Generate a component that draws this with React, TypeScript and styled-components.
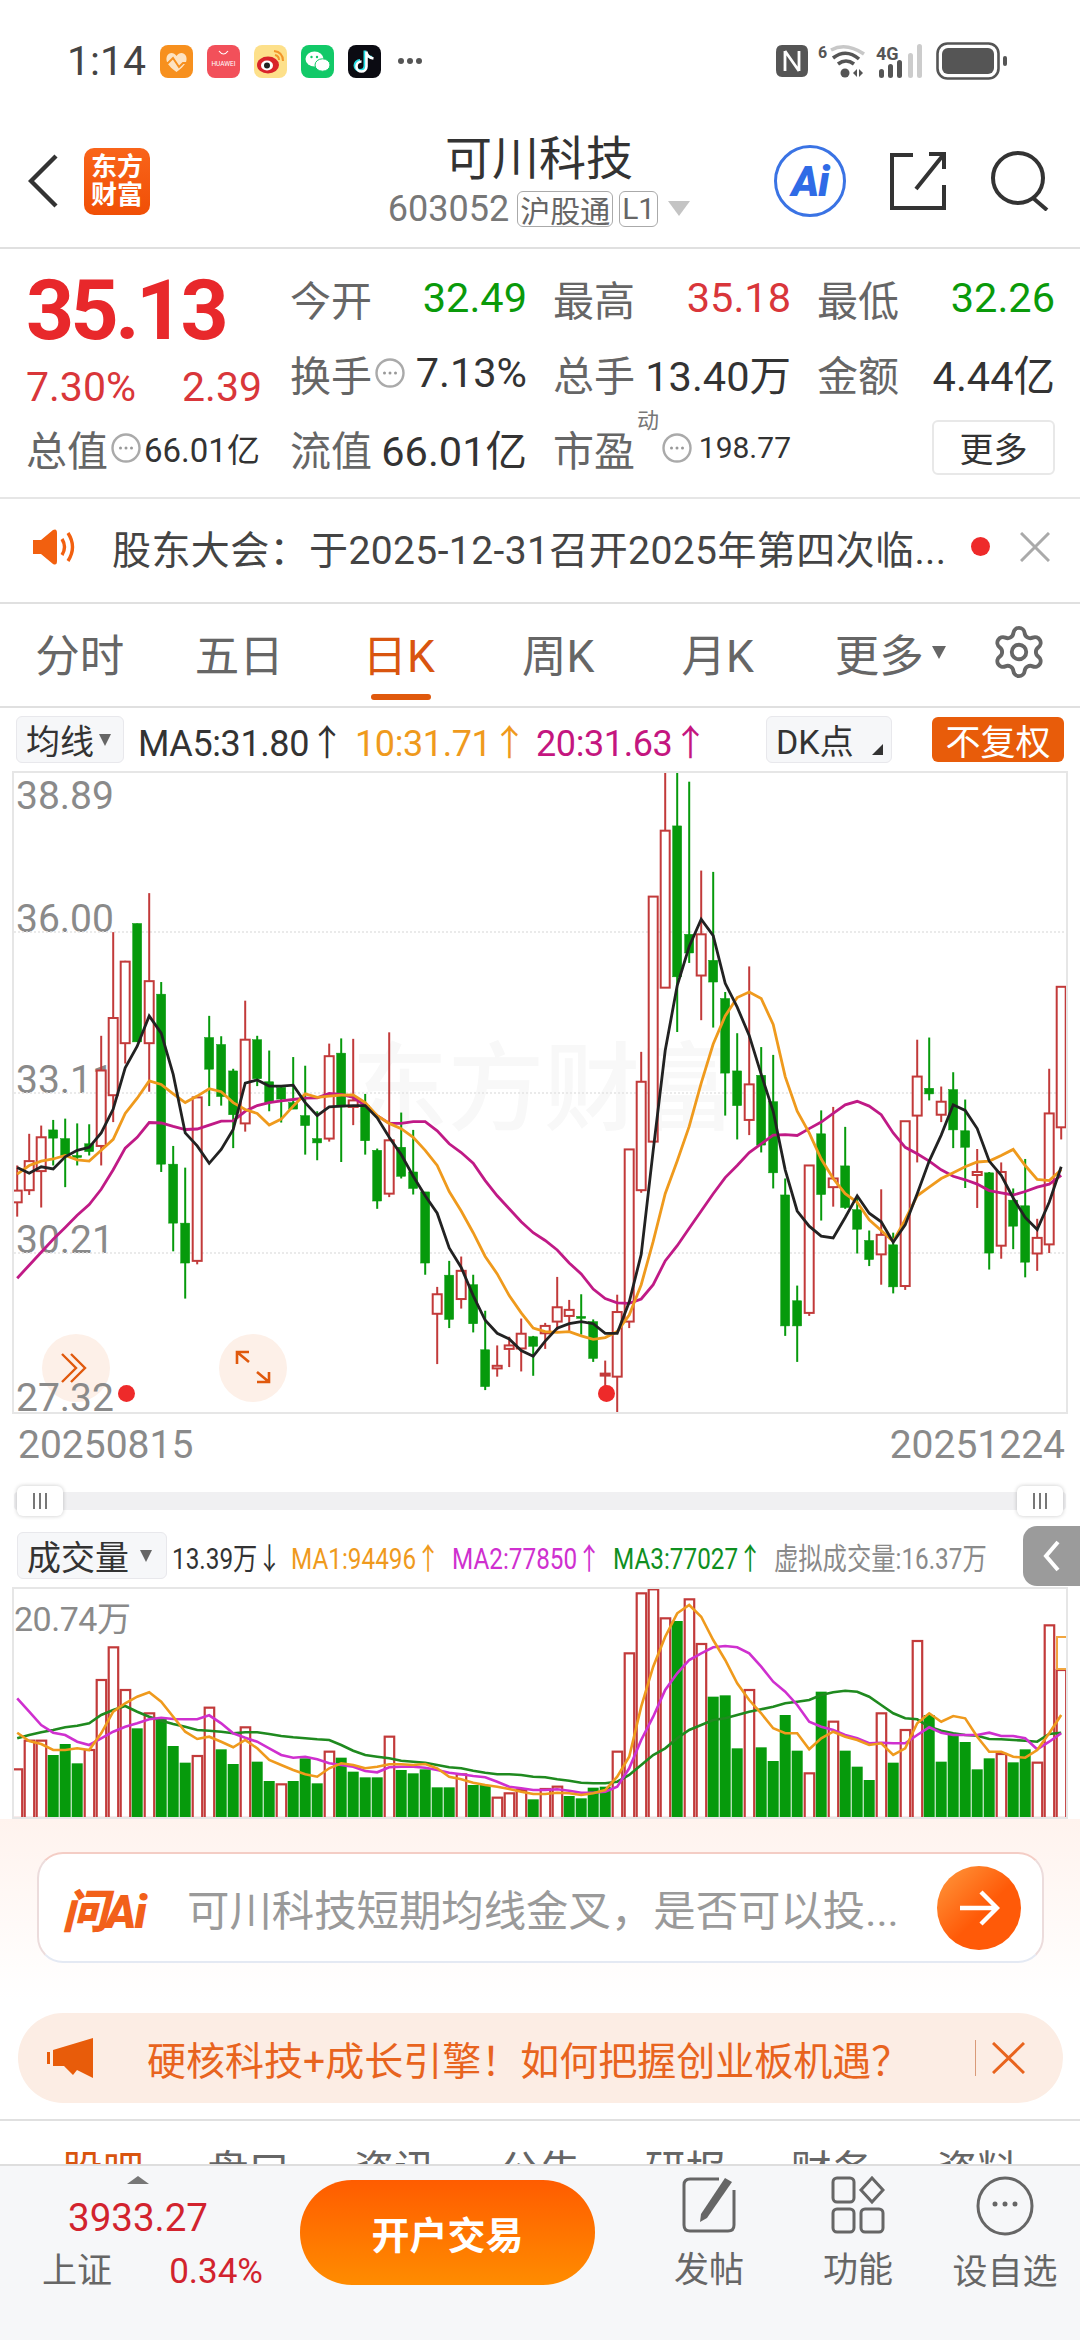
import React from 'react';
import styled, { createGlobalStyle } from 'styled-components';
import { Settings } from 'lucide-react';

const GlobalStyle = createGlobalStyle`
  html, body {
    margin: 0;
    padding: 0;
    background: #ffffff;
  }
  * {
    box-sizing: border-box;
  }
  body {
    font-family: Roboto, "Noto Sans CJK SC", sans-serif;
    color: #333333;
  }
`;

const RED_LINE = '#c23a3a';
const GREEN_BAR = '#069a0c';

// chart numbers are read off the reference: [kind, high, bodyTop, bodyBottom, low]
type Candle = ['r' | 'g', number, number, number, number];

const candles: Candle[] = [
  ['r', 935, 993, 1020, 1053], ['r', 862, 925, 992, 1003], ['r', 843, 870, 948, 1032], ['g', 830, 853, 872, 935],
  ['g', 827, 873, 912, 985], ['g', 838, 912, 916, 935], ['g', 840, 885, 903, 912], ['r', 636, 716, 890, 935],
  ['r', 397, 595, 773, 835], ['r', 463, 465, 653, 700], ['g', 377, 377, 650, 650], ['r', 307, 510, 653, 765],
  ['g', 512, 540, 932, 950], ['g', 890, 932, 1068, 1133], ['g', 940, 1068, 1160, 1242], ['r', 775, 778, 1155, 1163],
  ['g', 590, 640, 713, 798], ['g', 637, 656, 776, 797], ['g', 712, 717, 818, 895], ['r', 555, 645, 838, 857],
  ['g', 636, 645, 735, 752], ['g', 670, 742, 790, 810], ['g', 750, 755, 782, 836], ['g', 685, 790, 805, 805],
  ['g', 705, 820, 843, 910], ['g', 810, 873, 883, 923], ['r', 654, 683, 873, 880], ['g', 642, 676, 800, 927],
  ['r', 643, 785, 800, 842], ['g', 770, 797, 878, 910], ['g', 896, 900, 1017, 1035], ['r', 628, 877, 1000, 1008],
  ['g', 813, 893, 960, 965], ['g', 853, 950, 988, 1002], ['g', 996, 996, 1160, 1187], ['r', 1215, 1232, 1277, 1393],
  ['g', 1155, 1188, 1290, 1310], ['r', 1145, 1178, 1243, 1265], ['g', 1187, 1210, 1300, 1320], ['g', 1270, 1360, 1445, 1453],
  ['r', 1350, 1397, 1403, 1422], ['r', 1330, 1350, 1358, 1400], ['r', 1288, 1323, 1357, 1410], ['g', 1328, 1330, 1352, 1420],
  ['r', 1298, 1305, 1322, 1358], ['r', 1192, 1262, 1295, 1315], ['r', 1245, 1268, 1282, 1318], ['g', 1232, 1283, 1287, 1325],
  ['g', 1290, 1295, 1380, 1388], ['r', 1385, 1415, 1418, 1445], ['r', 1233, 1273, 1422, 1508], ['r', 898, 898, 1295, 1310],
  ['r', 673, 742, 992, 998], ['r', 315, 315, 880, 882], ['r', 25, 163, 525, 525], ['g', 30, 152, 500, 627],
  ['g', 50, 402, 445, 468], ['r', 255, 402, 497, 600], ['g', 258, 462, 512, 617], ['g', 535, 550, 722, 820],
  ['g', 630, 717, 797, 875], ['r', 476, 748, 830, 865], ['g', 662, 727, 888, 905], ['g', 680, 788, 952, 988],
  ['g', 965, 1003, 1305, 1328], ['g', 1212, 1247, 1305, 1388], ['r', 935, 935, 1275, 1282], ['g', 808, 862, 1002, 1062],
  ['r', 800, 965, 985, 1030], ['g', 846, 936, 1032, 1035], ['g', 1005, 1037, 1082, 1138], ['g', 1085, 1108, 1152, 1167],
  ['r', 990, 1095, 1140, 1210], ['g', 1090, 1118, 1215, 1230], ['r', 833, 833, 1213, 1222], ['r', 645, 730, 820, 928],
  ['g', 640, 757, 770, 785], ['r', 753, 788, 818, 835], ['g', 720, 760, 853, 895], ['g', 783, 855, 893, 987],
  ['r', 897, 950, 957, 1033], ['g', 950, 952, 1137, 1175], ['r', 928, 950, 1120, 1150], ['g', 988, 1015, 1075, 1128],
  ['g', 920, 1028, 1158, 1193], ['r', 1058, 1102, 1138, 1178], ['r', 712, 815, 1117, 1137], ['r', 523, 523, 847, 875],
];

const ma5 = [
  940, 953, 938, 943, 915, 900, 893, 860, 805, 710, 660, 590, 630, 725, 860, 890, 930, 898, 852, 745, 738, 752,
  752, 750, 790, 820, 800, 798, 797, 797, 825, 870, 910, 960, 1005, 1045, 1125, 1170, 1235, 1292, 1322, 1335, 1362, 1375,
  1340, 1310, 1300, 1295, 1300, 1322, 1322, 1250, 1140, 900, 670, 520, 430, 367, 405, 515, 570, 635, 725, 810, 945, 1040,
  1075, 1098, 1102, 1055, 1005, 1045, 1065, 1112, 1072, 1000, 925, 865, 795, 808, 850, 925, 958, 1010, 1055, 1083, 1020, 938,
];
const ma10 = [
  955, 935, 925, 920, 912, 922, 925, 900, 875, 815, 780, 740, 748, 770, 790, 775, 758, 765, 790, 806, 815, 842,
  828, 798, 770, 778, 775, 773, 772, 790, 820, 838, 850, 870, 900, 935, 995, 1040, 1090, 1145, 1185, 1235, 1275, 1310,
  1318, 1320, 1318, 1328, 1336, 1332, 1318, 1280, 1210, 1110, 1000, 925, 845, 745, 655, 590, 548, 535, 550, 610, 730, 810,
  860, 920, 965, 1000, 1020, 1060, 1085, 1110, 1060, 1005, 985, 965, 952, 938, 927, 925, 912, 898, 935, 967, 970, 945,
];
const ma20 = [
  1195, 1165, 1135, 1105, 1078, 1050, 1025, 990, 945, 895, 870, 836, 837, 845, 852, 851, 842, 833, 832, 810, 797, 790,
  786, 783, 780, 779, 769, 771, 778, 797, 820, 838, 838, 834, 834, 855, 885, 905, 930, 970, 1005, 1035, 1065, 1090,
  1108, 1130, 1160, 1185, 1220, 1242, 1252, 1253, 1243, 1210, 1155, 1120, 1080, 1040, 1000, 963, 935, 905, 885, 865, 864, 866,
  850, 835, 815, 795, 787, 798, 818, 860, 893, 908, 925, 945, 960, 968, 978, 993, 998, 1003, 995, 985, 978, 958,
];

// [kind, top of the bar]
const volumes: ['r' | 'g', number][] = [
  ['r', 988], ['r', 902], ['r', 902], ['g', 945], ['g', 912], ['g', 970], ['r', 930], ['r', 720], ['r', 622], ['r', 750], ['g', 865],
  ['r', 820], ['g', 835], ['g', 918], ['g', 968], ['r', 948], ['r', 803], ['g', 928], ['g', 972], ['r', 862], ['g', 965], ['g', 1023],
  ['r', 1033], ['g', 1023], ['g', 955], ['g', 1030], ['r', 935], ['g', 953], ['g', 995], ['g', 1012], ['g', 1012], ['r', 890], ['g', 990],
  ['g', 1000], ['g', 988], ['g', 1042], ['g', 1042], ['r', 1003], ['g', 1035], ['g', 1035], ['r', 1073], ['r', 1060], ['r', 1050], ['g', 1078],
  ['r', 1047], ['r', 1040], ['g', 1068], ['g', 1075], ['g', 1043], ['g', 1040], ['r', 935], ['r', 640], ['r', 460], ['r', 448], ['r', 535],
  ['g', 543], ['r', 478], ['r', 612], ['g', 770], ['g', 766], ['g', 925], ['r', 750], ['g', 922], ['g', 963], ['g', 825], ['g', 932], ['r', 1000],
  ['g', 755], ['r', 845], ['g', 932], ['g', 980], ['g', 1020], ['r', 820], ['g', 968], ['r', 870], ['r', 603], ['g', 825], ['g', 965], ['g', 885],
  ['g', 906], ['g', 988], ['g', 955], ['r', 942], ['g', 967], ['g', 928], ['r', 968], ['r', 556], ['r', 690],
];
const vol1 = [
  878, 903, 912, 930, 930, 925, 930, 880, 815, 790, 770, 757, 785, 830, 875, 897, 890, 905, 922, 900, 925, 960, 975, 990, 1003, 1010, 985, 970, 975,
  985, 980, 973, 973, 975, 972, 985, 1010, 1018, 1028, 1035, 1040, 1047, 1055, 1062, 1062, 1058, 1060, 1065, 1060, 1050, 1010, 950, 800, 680, 590, 520,
  495, 530, 600, 660, 730, 780, 820, 865, 880, 880, 928, 895, 875, 890, 900, 915, 910, 945, 925, 850, 820, 845, 828, 835, 890, 935, 935, 950, 953, 930, 880, 825,
];
const vol2 = [
  775, 815, 855, 878, 885, 905, 915, 895, 875, 860, 850, 838, 833, 837, 838, 838, 826, 850, 880, 893, 905, 925, 945, 953, 950, 958, 970, 975, 980,
  993, 997, 982, 980, 980, 983, 990, 998, 1003, 1008, 1012, 1025, 1040, 1045, 1050, 1050, 1048, 1052, 1058, 1058, 1055, 1040, 985, 900, 830, 750, 700,
  660, 640, 622, 618, 622, 640, 680, 725, 755, 795, 845, 860, 870, 885, 895, 910, 908, 910, 910, 885, 862, 878, 885, 885, 885, 878, 888, 888, 895, 928, 905, 880,
];
const vol3 = [
  895, 885, 877, 870, 862, 857, 850, 825, 810, 798, 815, 830, 842, 852, 860, 870, 872, 875, 880, 877, 877, 882, 888, 892, 895, 898, 900, 915, 932,
  945, 950, 955, 962, 965, 968, 975, 982, 985, 992, 998, 1003, 1003, 1005, 1010, 1012, 1018, 1022, 1028, 1030, 1030, 1025, 1005, 975, 945, 925, 895,
  870, 855, 840, 835, 825, 815, 808, 800, 790, 785, 780, 765, 757, 752, 755, 770, 795, 820, 835, 838, 860, 872, 880, 885, 887, 897, 898, 900, 902, 905, 882, 878,
];

const slotX = (i: number) => 17.2 + 12 * i;
const priceY = (v: number) => 760 + v / 2.306;
const volY = (v: number) => 1440 + v / 3;

const toPoints = (values: number[], toY: (v: number) => number) =>
  values.map((v, i) => `${slotX(i).toFixed(1)},${toY(v).toFixed(1)}`).join(' ');

const Page = styled.div`
  position: relative;
  width: 1080px;
  height: 2340px;
  overflow: hidden;
  background: #ffffff;
`;

const StatusBar = styled.div`
  display: flex;
  align-items: center;
  height: 122px;
  padding: 0 72px 0 67px;
`;

const StatusTime = styled.span`
  width: 93px;
  font-size: 41px;
  color: #444444;
`;

const StatusApps = styled.div`
  display: flex;
  align-items: center;
  gap: 14px;
`;

const StatusDots = styled.div`
  display: flex;
  gap: 3px;
  margin-left: 3px;
`;

const StatusDot = styled.i`
  width: 6px;
  height: 6px;
  border-radius: 50%;
  background: #555555;
`;

const StatusRight = styled.div`
  display: flex;
  align-items: center;
  gap: 10px;
  margin-left: auto;
`;

const Header = styled.div`
  display: grid;
  grid-template-columns: 1fr auto 1fr;
  align-items: center;
  height: 127px;
  padding: 0 30px 7px 28px;
  border-bottom: 2px solid #e0e0e0;
`;

const HeaderLeft = styled.div`
  display: flex;
  align-items: center;
  gap: 26px;
`;

const BrandLogo = styled.div`
  display: flex;
  align-items: center;
  justify-content: center;
  width: 66px;
  height: 67px;
  border-radius: 10px;
  background: linear-gradient(#f9641a, #f04f06);
  color: #ffffff;
  font-size: 26px;
  font-weight: 700;
  line-height: 28px;
  text-align: center;
`;

const HeaderCenter = styled.div`
  display: flex;
  flex-direction: column;
  align-items: center;
  margin-top: -3px;
`;

const StockName = styled.div`
  font-size: 47px;
  line-height: 58px;
  color: #333333;
`;

const StockMeta = styled.div`
  display: flex;
  align-items: center;
  height: 42px;
  color: #777777;
  font-size: 36px;
`;

const MetaBadge = styled.span<{ $gap: number }>`
  display: flex;
  align-items: center;
  height: 36px;
  margin-left: ${(p) => p.$gap}px;
  padding: 0 2px;
  border: 1.5px solid #aaaaaa;
  border-radius: 6px;
  font-size: 30px;
  color: #666666;
`;

const MetaCaret = styled.i`
  margin-left: 10px;
  border-left: 11px solid transparent;
  border-right: 11px solid transparent;
  border-top: 15px solid #c4c4c4;
`;

const HeaderRight = styled.div`
  display: flex;
  align-items: center;
  justify-content: flex-end;
  gap: 43px;
`;

const AiBadge = styled.div`
  position: relative;
  display: flex;
  align-items: center;
  justify-content: center;
  width: 72px;
  height: 72px;
  border: 3px solid #3a73e4;
  border-radius: 50%;
  color: #2f6be6;
  font-size: 42px;
  font-weight: 900;
  font-style: italic;
  letter-spacing: -1px;
`;

const Quote = styled.div`
  display: flex;
  height: 250px;
  padding-left: 26px;
  border-bottom: 2px solid #e6e6e6;
`;

const QuoteLeft = styled.div`
  display: flex;
  flex-direction: column;
  width: 264px;
  padding-top: 12px;
`;

const BigPrice = styled.div`
  height: 100px;
  font-size: 84px;
  font-weight: 700;
  line-height: 100px;
  color: #e8282b;
  letter-spacing: -3.6px;
`;

const ChangeRow = styled.div`
  display: flex;
  justify-content: space-between;
  align-items: center;
  width: 236px;
  height: 52px;
  font-size: 41px;
  color: #d9363a;
`;

const TotalRow = styled.div`
  display: flex;
  align-items: center;
  width: 236px;
  height: 70px;
`;

const QuoteGrid = styled.div`
  display: grid;
  grid-template-columns: 237px 238px 238px;
  grid-auto-rows: 75px;
  column-gap: 26px;
  padding-top: 11px;
`;

const Cell = styled.div`
  display: flex;
  justify-content: space-between;
  align-items: center;
`;

const CellGroup = styled.div`
  display: flex;
  align-items: center;
`;

const Label = styled.span`
  flex: none;
  font-size: 41px;
  color: #666666;
  white-space: nowrap;
`;

const Value = styled.span<{ $tone?: 'up' | 'down'; $small?: boolean }>`
  flex: none;
  font-size: ${(p) => (p.$small ? 33 : 41.5)}px;
  color: ${(p) => (p.$tone === 'up' ? '#d9363a' : p.$tone === 'down' ? '#0a9a0a' : '#333333')};
  white-space: nowrap;
`;

const PeValue = styled.span`
  flex: none;
  font-size: 30px;
  color: #333333;
`;

const SmallNote = styled.span`
  align-self: flex-start;
  margin: -10px 0 0 2px;
  font-size: 22px;
  line-height: 26px;
  color: #777777;
`;

const MoreButton = styled.div`
  display: flex;
  align-items: center;
  justify-content: center;
  width: 123px;
  height: 55px;
  border: 2px solid #e8e8e8;
  border-radius: 6px;
  font-size: 34px;
  color: #333333;
`;

const Notice = styled.div`
  display: flex;
  align-items: center;
  height: 105px;
  padding: 0 30px 8px 33px;
  border-bottom: 2px solid #e0e0e0;
`;

const NoticeText = styled.span`
  flex: 1;
  margin-left: 33px;
  font-size: 39px;
  letter-spacing: 0.4px;
  color: #444444;
  white-space: nowrap;
`;

const NoticeDot = styled.i`
  flex: none;
  width: 19px;
  height: 19px;
  margin-right: 30px;
  border-radius: 50%;
  background: #ee2a2a;
`;

const Tabs = styled.div`
  display: grid;
  grid-template-columns: repeat(6, 159.5px) 1fr;
  align-items: center;
  height: 104px;
  border-bottom: 2px solid #e0e0e0;
`;

const Tab = styled.div<{ $active?: boolean; $shift?: number }>`
  position: relative;
  display: flex;
  align-items: center;
  justify-content: center;
  height: 100%;
  padding-bottom: 6px;
  padding-left: ${(p) => p.$shift ?? 0}px;
  font-size: 44.5px;
  color: ${(p) => (p.$active ? '#d9550f' : '#666666')};
  ${(p) =>
    p.$active &&
    `&::after {
      content: '';
      position: absolute;
      left: 50%;
      bottom: 6px;
      width: 60px;
      height: 6px;
      margin-left: -28px;
      border-radius: 3px;
      background: #e0590d;
    }`}
`;

const TabCaret = styled.i`
  margin-left: 8px;
  border-left: 7px solid transparent;
  border-right: 7px solid transparent;
  border-top: 13px solid #666666;
`;

const GearCell = styled.div`
  display: flex;
  justify-content: center;
  color: #666666;
  padding-bottom: 6px;
`;

const IndicatorRow = styled.div`
  display: flex;
  align-items: center;
  height: 63px;
  padding: 0 16px;
  white-space: nowrap;
`;

const SelectButton = styled.div<{ $width: number; $left?: number }>`
  position: relative;
  display: flex;
  align-items: center;
  gap: 5px;
  flex: none;
  width: ${(p) => p.$width}px;
  height: 47px;
  margin-left: ${(p) => p.$left ?? 0}px;
  padding-left: 9px;
  border: 1.5px solid #e8e8ec;
  border-radius: 6px;
  background: #f6f7f9;
  font-size: 34px;
  color: #333333;
`;

const SelectCaret = styled.i<{ $left?: number }>`
  margin-left: ${(p) => p.$left ?? 0}px;
  border-left: 6px solid transparent;
  border-right: 6px solid transparent;
  border-top: 12px solid #666666;
`;

const CornerMark = styled.i`
  position: absolute;
  right: 8px;
  bottom: 7px;
  border-left: 11px solid transparent;
  border-bottom: 11px solid #333333;
`;

const MaText = styled.span<{ $color: string; $left: number; $width?: number }>`
  flex: none;
  width: ${(p) => (p.$width ? `${p.$width}px` : 'auto')};
  margin-left: ${(p) => p.$left}px;
  font-size: 36px;
  letter-spacing: -0.4px;
  color: ${(p) => p.$color};
`;

const ReinstateButton = styled.div`
  display: flex;
  align-items: center;
  justify-content: center;
  flex: none;
  width: 132px;
  height: 45px;
  margin-left: auto;
  border-radius: 6px;
  background: #e85c0a;
  font-size: 35px;
  color: #ffffff;
`;

const ChartFrame = styled.div<{ $height: number }>`
  position: relative;
  height: ${(p) => p.$height}px;
  margin: 0 12px 0 12px;
  border: 2px solid #e6e6e6;
`;

const ChartSvg = styled.svg`
  position: absolute;
  inset: 0;
  display: block;
  width: 100%;
  height: 100%;
`;

const Watermark = styled.div`
  position: absolute;
  left: 338px;
  top: 256px;
  font-size: 96px;
  font-weight: 500;
  line-height: 120px;
  color: #f8f8f8;
  white-space: nowrap;
`;

const AxisLabel = styled.span<{ $top: number }>`
  position: absolute;
  left: 2px;
  top: ${(p) => p.$top}px;
  font-size: 39px;
  line-height: 44px;
  color: #8a8a8a;
`;

const RoundAction = styled.div<{ $left: number }>`
  position: absolute;
  left: ${(p) => p.$left}px;
  top: 561px;
  display: flex;
  align-items: center;
  justify-content: center;
  width: 68px;
  height: 68px;
  border-radius: 50%;
  background: #fdf0e8;
`;

const MarkDot = styled.i<{ $left: number }>`
  position: absolute;
  left: ${(p) => p.$left}px;
  top: 612px;
  width: 17px;
  height: 17px;
  border-radius: 50%;
  background: #ee2a2a;
`;

const DateRow = styled.div`
  display: flex;
  justify-content: space-between;
  align-items: center;
  height: 62px;
  padding: 0 15px 0 18px;
  font-size: 39px;
  color: #8a8a8a;
`;

const SliderRow = styled.div`
  position: relative;
  display: flex;
  align-items: center;
  height: 50px;
  margin: 0 14px;
`;

const SliderTrack = styled.div`
  width: 100%;
  height: 18px;
  border-radius: 4px;
  background: #f0f0f2;
`;

const SliderHandle = styled.div<{ $side: 'left' | 'right' }>`
  position: absolute;
  top: 10px;
  ${(p) => p.$side}: 3px;
  display: flex;
  align-items: center;
  justify-content: center;
  gap: 4px;
  width: 46px;
  height: 30px;
  border-radius: 6px;
  background: #ffffff;
  box-shadow: 0 0 4px rgba(0, 0, 0, 0.22);
`;

const HandleLine = styled.i`
  width: 2px;
  height: 16px;
  background: #777777;
`;

const VolumeHeader = styled.div`
  position: relative;
  display: flex;
  align-items: center;
  height: 61px;
  padding: 0 0 2px 17px;
  white-space: nowrap;
`;

// the source font is a narrow one: the text keeps its height and is squeezed sideways
const VolumeText = styled.span<{ $color: string; $width: number }>`
  flex: none;
  width: ${(p) => p.$width}px;
  margin-left: 11px;
  font-size: 30px;
  color: ${(p) => p.$color};
  transform: scaleX(0.81);
  transform-origin: left center;
`;

const CollapseTab = styled.div`
  position: absolute;
  right: 0;
  top: 0;
  display: flex;
  align-items: center;
  justify-content: center;
  width: 57px;
  height: 60px;
  border-radius: 14px 0 0 14px;
  background: #9b9b9b;
`;

const VolumeLabel = styled.span`
  position: absolute;
  left: 0;
  top: 10px;
  font-size: 34px;
  line-height: 40px;
  letter-spacing: -0.5px;
  color: #8a8a8a;
`;

const Promo = styled.div`
  display: flex;
  flex-direction: column;
  height: 302px;
  padding-top: 33px;
  background: linear-gradient(#fff3ee, #ffffff 60%);
  border-bottom: 2px solid #e0e0e0;
`;

const AskCard = styled.div`
  display: flex;
  align-items: center;
  height: 111px;
  margin: 0 36px 0 37px;
  padding: 0 21px 0 23px;
  border: 2px solid #ecdcdc;
  border-top-color: #f4cdc5;
  border-bottom-color: #e4e9f3;
  border-radius: 26px;
  background: #ffffff;
`;

const AskLogo = styled.span`
  flex: none;
  width: 100px;
  font-size: 46px;
  font-weight: 900;
  font-style: italic;
  letter-spacing: -2px;
  color: #f2601a;
`;

const AskText = styled.span`
  flex: 1;
  margin-left: 25px;
  font-size: 42.4px;
  color: #9a9a9a;
  white-space: nowrap;
`;

const AskGo = styled.div`
  display: flex;
  align-items: center;
  justify-content: center;
  flex: none;
  width: 84px;
  height: 84px;
  border-radius: 50%;
  background: linear-gradient(135deg, #ff9a3e, #ff5a08 55%);
`;

const Banner = styled.div`
  display: flex;
  align-items: center;
  height: 90px;
  margin: 50px 17px 0 18px;
  padding: 0 38px 0 29px;
  border-radius: 45px;
  background: #fcede4;
`;

const BannerText = styled.span`
  flex: 1;
  margin-left: 54px;
  font-size: 39px;
  color: #e8641e;
  white-space: nowrap;
`;

const BannerDivider = styled.i`
  flex: none;
  width: 1px;
  height: 36px;
  margin-right: 16px;
  background: #d99a78;
`;

const SubTabs = styled.div`
  display: grid;
  grid-template-columns: repeat(7, 1fr);
  padding: 22px 30px 0 30px;
`;

const SubTab = styled.div<{ $active?: boolean }>`
  font-size: 41px;
  line-height: 56px;
  text-align: center;
  color: ${(p) => (p.$active ? '#d9550f' : '#666666')};
`;

const BottomBar = styled.div`
  position: absolute;
  left: 0;
  right: 0;
  bottom: 0;
  display: flex;
  height: 176px;
  border-top: 2px solid #dedede;
  background: #f6f7f9;
`;

const IndexBlock = styled.div`
  position: relative;
  flex: none;
  width: 300px;
  padding: 29px 0 0 42px;
`;

const IndexCaret = styled.i`
  position: absolute;
  left: 127px;
  top: 10px;
  border-left: 11px solid transparent;
  border-right: 11px solid transparent;
  border-bottom: 8px solid #777777;
`;

const IndexValue = styled.div`
  margin-left: 26px;
  font-size: 38.5px;
  line-height: 46px;
  color: #d2232e;
`;

const IndexRow = styled.div`
  display: flex;
  justify-content: space-between;
  align-items: center;
  width: 221px;
  margin-top: 9px;
  font-size: 35px;
  line-height: 44px;
  color: #666666;
`;

const IndexChange = styled.span`
  color: #d2232e;
`;

const TradeButton = styled.div`
  display: flex;
  align-items: center;
  justify-content: center;
  flex: none;
  width: 295px;
  height: 105px;
  margin-top: 14px;
  border-radius: 52px;
  background: linear-gradient(#ff5c00, #ff8c00);
  font-size: 38px;
  font-weight: 700;
  color: #ffffff;
`;

const BarAction = styled.div<{ $left: number }>`
  display: flex;
  flex-direction: column;
  align-items: center;
  flex: none;
  width: 110px;
  margin-left: ${(p) => p.$left}px;
  padding-top: 10px;
  font-size: 35px;
  color: #666666;
`;

const BarActionLabel = styled.span`
  margin-top: 17px;
  line-height: 40px;
  white-space: nowrap;
`;

function InfoDot(): JSX.Element {
  return (
    <svg width="30" height="30" viewBox="0 0 30 30" style={{ flex: 'none', margin: '0 3px' }}>
      <circle cx="15" cy="15" r="13.5" fill="none" stroke="#aaaaaa" strokeWidth="2.4" />
      <circle cx="9.5" cy="15" r="1.5" fill="#999999" />
      <circle cx="15" cy="15" r="1.5" fill="#999999" />
      <circle cx="20.5" cy="15" r="1.5" fill="#999999" />
    </svg>
  );
}

function AppIcons(): JSX.Element {
  return (
    <StatusApps>
      <svg width="33" height="33" viewBox="0 0 33 33">
        <rect width="33" height="33" rx="8" fill="#f7901e" />
        <path d="M16.5 27 C8 21 5 16 7 11 C9 7 14 7 16.5 11 C19 7 24 7 26 11 C28 16 25 21 16.5 27Z" fill="#fde3c2" />
        <path d="M0 18 H8 L13 13 L19 22 L23 18 H33" fill="none" stroke="#f7901e" strokeWidth="2" />
      </svg>
      <svg width="33" height="33" viewBox="0 0 33 33">
        <rect width="33" height="33" rx="8" fill="#f2505a" />
        <path d="M12 6 Q16.5 12 21 6" fill="none" stroke="#ffffff" strokeWidth="1.2" />
        <text x="16.5" y="21" fontSize="6.5" fill="#ffffff" textAnchor="middle" fontFamily="Roboto">
          HUAWEI
        </text>
      </svg>
      <svg width="33" height="33" viewBox="0 0 33 33">
        <rect width="33" height="33" rx="8" fill="#fde08a" />
        <ellipse cx="14" cy="20" rx="11" ry="8.5" fill="#d9232a" />
        <ellipse cx="13" cy="20.5" rx="6" ry="5" fill="#ffffff" />
        <circle cx="13" cy="20.5" r="3" fill="#222222" />
        <path d="M20 6 Q29 7 29 16 M21 10 Q25 11 25 15" fill="none" stroke="#f2952a" strokeWidth="2" />
      </svg>
      <svg width="33" height="33" viewBox="0 0 33 33">
        <rect width="33" height="33" rx="8" fill="#12c968" />
        <ellipse cx="13.5" cy="14" rx="9" ry="7.5" fill="#ffffff" />
        <ellipse cx="21.5" cy="20" rx="7.5" ry="6.2" fill="#ffffff" stroke="#12c968" strokeWidth="1" />
        <circle cx="10.5" cy="12" r="1.2" fill="#12c968" />
        <circle cx="16" cy="12" r="1.2" fill="#12c968" />
      </svg>
      <svg width="33" height="33" viewBox="0 0 33 33">
        <rect width="33" height="33" rx="8" fill="#0b0b12" />
        <path
          d="M18 6 V21 a5 5 0 1 1 -5 -5 M18 7 Q19 12 25 13"
          fill="none"
          stroke="#25e0e8"
          strokeWidth="3"
          transform="translate(-1,-0.5)"
        />
        <path
          d="M18 6 V21 a5 5 0 1 1 -5 -5 M18 7 Q19 12 25 13"
          fill="none"
          stroke="#ffffff"
          strokeWidth="2.6"
          transform="translate(0.5,0.5)"
        />
      </svg>
      <StatusDots>
        <StatusDot />
        <StatusDot />
        <StatusDot />
      </StatusDots>
    </StatusApps>
  );
}

function SystemIcons(): JSX.Element {
  return (
    <StatusRight>
      <svg width="32" height="34" viewBox="0 0 32 34">
        <path d="M6 1 H26 Q32 1 32 8 V26 Q32 33 26 33 H6 Q0 33 0 26 V8 Q0 1 6 1Z" fill="#555555" />
        <path d="M9 7 V27 M9 7 L23 27 M23 7 V27" fill="none" stroke="#ffffff" strokeWidth="2.8" />
      </svg>
      <svg width="48" height="36" viewBox="0 0 48 36">
        <text x="0" y="15" fontSize="16" fontWeight="700" fill="#555555" fontFamily="Roboto">
          6
        </text>
        <path d="M13 7 Q28 -1 46 11" fill="none" stroke="#c8c8c8" strokeWidth="3.6" />
        <path d="M15 15 Q28 5 41 16 M20 21 Q28 15 36 21" fill="none" stroke="#555555" strokeWidth="3.6" />
        <circle cx="27" cy="30" r="4.5" fill="#555555" />
        <path d="M35 30 L39 26 V34Z M41 26 V34 L45 30Z" fill="#555555" />
      </svg>
      <svg width="50" height="36" viewBox="0 0 50 36">
        <text x="0" y="17" fontSize="18" fontWeight="700" fill="#555555" fontFamily="Roboto">
          4G
        </text>
        <rect x="3" y="26" width="5" height="9" rx="2.5" fill="#555555" />
        <rect x="12" y="21" width="5" height="14" rx="2.5" fill="#555555" />
        <rect x="21" y="17" width="5" height="18" rx="2.5" fill="#555555" />
        <rect x="32" y="10" width="5" height="25" rx="2.5" fill="#cccccc" />
        <rect x="41" y="1" width="5" height="34" rx="2.5" fill="#cccccc" />
      </svg>
      <svg width="72" height="38" viewBox="0 0 72 38">
        <rect x="1.5" y="1.5" width="61" height="35" rx="10" fill="none" stroke="#555555" strokeWidth="2.6" />
        <rect x="6" y="6" width="52" height="26" rx="6" fill="#555555" />
        <rect x="67" y="14" width="4" height="10" rx="2" fill="#555555" />
      </svg>
    </StatusRight>
  );
}

function PriceChart(): JSX.Element {
  return (
    <ChartFrame $height={643}>
      <Watermark>东方财富</Watermark>
      <RoundAction $left={28}>
        <svg width="34" height="34" viewBox="0 0 34 34" fill="none" stroke="#e0590d" strokeWidth="2.4">
          <path d="M3 3 L17 17 L3 31 M12 3 L26 17 L12 31" />
        </svg>
      </RoundAction>
      <RoundAction $left={205}>
        <svg width="36" height="36" viewBox="0 0 36 36" fill="none" stroke="#e0590d" strokeWidth="2.6">
          <path d="M2 14 V2 H14 M2 2 L14 12 M34 22 V32 H22 M34 32 L22 22" />
        </svg>
      </RoundAction>
      <AxisLabel $top={1}>38.89</AxisLabel>
      <AxisLabel $top={124}>36.00</AxisLabel>
      <AxisLabel $top={285}>33.11</AxisLabel>
      <AxisLabel $top={445}>30.21</AxisLabel>
      <AxisLabel $top={603}>27.32</AxisLabel>
      <ChartSvg viewBox="14 773 1052 639">
        {[932, 1093, 1253].map((y) => (
          <line key={y} x1="14" x2="1066" y1={y} y2={y} stroke="#e4e4e4" strokeWidth="1.5" strokeDasharray="2 2" />
        ))}
        {candles.map(([kind, high, top, bottom, low], i) => {
          const x = slotX(i);
          const up = kind === 'r';
          const color = up ? RED_LINE : GREEN_BAR;
          const bodyTop = priceY(top);
          const bodyHeight = Math.max(priceY(bottom) - bodyTop, 2);
          return (
            <g key={i}>
              <line x1={x} x2={x} y1={priceY(high)} y2={priceY(low)} stroke={color} strokeWidth="2" />
              <rect
                x={x - 4.5}
                y={bodyTop}
                width="9"
                height={bodyHeight}
                fill={up ? '#ffffff' : color}
                stroke={color}
                strokeWidth={up ? 2 : 0.5}
              />
            </g>
          );
        })}
        <polyline points={toPoints(ma20, priceY)} fill="none" stroke="#c01a86" strokeWidth="2.8" />
        <polyline points={toPoints(ma10, priceY)} fill="none" stroke="#ef9a1d" strokeWidth="2.8" />
        <polyline points={toPoints(ma5, priceY)} fill="none" stroke="#222222" strokeWidth="2.8" />
      </ChartSvg>
      <MarkDot $left={104} />
      <MarkDot $left={584} />
    </ChartFrame>
  );
}

function VolumeChart(): JSX.Element {
  return (
    <ChartFrame $height={232}>
      <VolumeLabel>20.74万</VolumeLabel>
      <ChartSvg viewBox="14 1589 1052 228">
        {volumes.map(([kind, top], i) => {
          const x = slotX(i);
          const y = volY(top);
          const height = 1818 - y;
          return kind === 'r' ? (
            <rect key={i} x={x - 4.5} y={y} width="9.5" height={height} fill="#ffffff" stroke={RED_LINE} strokeWidth="2.2" />
          ) : (
            <rect key={i} x={x - 5.5} y={y} width="11" height={height} fill={GREEN_BAR} />
          );
        })}
        <rect x="1057" y="1637" width="10" height="32" fill="none" stroke="#f2a640" strokeWidth="2" />
        <polyline points={toPoints(vol3, volY)} fill="none" stroke="#1f8a1f" strokeWidth="2.6" />
        <polyline points={toPoints(vol2, volY)} fill="none" stroke="#cf30cf" strokeWidth="2.6" />
        <polyline points={toPoints(vol1, volY)} fill="none" stroke="#ef9a1d" strokeWidth="2.6" />
      </ChartSvg>
    </ChartFrame>
  );
}

export default function App(): JSX.Element {
  return (
    <Page>
      <GlobalStyle />
      <StatusBar>
        <StatusTime>1:14</StatusTime>
        <AppIcons />
        <SystemIcons />
      </StatusBar>

      <Header>
        <HeaderLeft>
          <svg width="30" height="54" viewBox="0 0 30 54" fill="none" stroke="#333333" strokeWidth="4.4">
            <path d="M28 2 L3 27 L28 52" />
          </svg>
          <BrandLogo>
            东方
            <br />
            财富
          </BrandLogo>
        </HeaderLeft>
        <HeaderCenter>
          <StockName>可川科技</StockName>
          <StockMeta>
            603052
            <MetaBadge $gap={8}>沪股通</MetaBadge>
            <MetaBadge $gap={6}>L1</MetaBadge>
            <MetaCaret />
          </StockMeta>
        </HeaderCenter>
        <HeaderRight>
          <AiBadge>Ai</AiBadge>
          <svg width="58" height="60" viewBox="0 0 58 60" fill="none" stroke="#333333" strokeWidth="4">
            <path d="M24 4 H3 V57 H55 V34 M55 18 V3 H40 M55 3 L27 38" />
          </svg>
          <svg width="60" height="60" viewBox="0 0 60 60" fill="none" stroke="#333333" strokeWidth="4">
            <circle cx="28" cy="27" r="25" />
            <path d="M43 47 L57 59" />
          </svg>
        </HeaderRight>
      </Header>

      <Quote>
        <QuoteLeft>
          <BigPrice>35.13</BigPrice>
          <ChangeRow>
            <span>7.30%</span>
            <span>2.39</span>
          </ChangeRow>
          <TotalRow>
            <Label>总值</Label>
            <InfoDot />
            <Value $small>66.01亿</Value>
          </TotalRow>
        </QuoteLeft>
        <QuoteGrid>
          <Cell>
            <Label>今开</Label>
            <Value $tone="down">32.49</Value>
          </Cell>
          <Cell>
            <Label>最高</Label>
            <Value $tone="up">35.18</Value>
          </Cell>
          <Cell>
            <Label>最低</Label>
            <Value $tone="down">32.26</Value>
          </Cell>
          <Cell>
            <CellGroup>
              <Label>换手</Label>
              <InfoDot />
            </CellGroup>
            <Value>7.13%</Value>
          </Cell>
          <Cell>
            <Label>总手</Label>
            <Value>13.40万</Value>
          </Cell>
          <Cell>
            <Label>金额</Label>
            <Value>4.44亿</Value>
          </Cell>
          <Cell>
            <Label>流值</Label>
            <Value>66.01亿</Value>
          </Cell>
          <Cell>
            <CellGroup>
              <Label>市盈</Label>
              <SmallNote>动</SmallNote>
              <InfoDot />
            </CellGroup>
            <PeValue>198.77</PeValue>
          </Cell>
          <Cell>
            <span />
            <MoreButton>更多</MoreButton>
          </Cell>
        </QuoteGrid>
      </Quote>

      <Notice>
        <svg width="46" height="38" viewBox="0 0 46 38" fill="#f2600f">
          <path d="M0 12 H8 L20 2 Q24 0 24 5 V33 Q24 38 20 36 L8 26 H0Z" />
          <path d="M29 11 Q34 19 29 27 M35 5 Q44 19 35 33" fill="none" stroke="#f2600f" strokeWidth="3.4" />
        </svg>
        <NoticeText>股东大会：于2025-12-31召开2025年第四次临...</NoticeText>
        <NoticeDot />
        <svg width="30" height="30" viewBox="0 0 30 30" fill="none" stroke="#aaaaaa" strokeWidth="3">
          <path d="M1 1 L29 29 M29 1 L1 29" />
        </svg>
      </Notice>

      <Tabs>
        <Tab>分时</Tab>
        <Tab>五日</Tab>
        <Tab $active>日K</Tab>
        <Tab>周K</Tab>
        <Tab>月K</Tab>
        <Tab $shift={26}>
          更多
          <TabCaret />
        </Tab>
        <GearCell>
          <Settings size={58} strokeWidth={1.6} />
        </GearCell>
      </Tabs>

      <IndicatorRow>
        <SelectButton $width={108}>
          均线
          <SelectCaret />
        </SelectButton>
        <MaText $color="#333333" $left={14} $width={204}>
          MA5:31.80↑
        </MaText>
        <MaText $color="#ef9a1d" $left={13} $width={170}>
          10:31.71↑
        </MaText>
        <MaText $color="#c4167f" $left={11} $width={170}>
          20:31.63↑
        </MaText>
        <SelectButton $width={126} $left={60}>
          DK点
          <CornerMark />
        </SelectButton>
        <ReinstateButton>不复权</ReinstateButton>
      </IndicatorRow>

      <PriceChart />

      <DateRow>
        <span>20250815</span>
        <span>20251224</span>
      </DateRow>

      <SliderRow>
        <SliderTrack />
        <SliderHandle $side="left">
          <HandleLine />
          <HandleLine />
          <HandleLine />
        </SliderHandle>
        <SliderHandle $side="right">
          <HandleLine />
          <HandleLine />
          <HandleLine />
        </SliderHandle>
      </SliderRow>

      <VolumeHeader>
        <SelectButton $width={150}>
          成交量
          <SelectCaret $left={6} />
        </SelectButton>
        <VolumeText $color="#333333" $width={108} style={{ marginLeft: 5 }}>
          13.39万↓
        </VolumeText>
        <VolumeText $color="#ef9a1d" $width={150}>
          MA1:94496↑
        </VolumeText>
        <VolumeText $color="#cf30cf" $width={150}>
          MA2:77850↑
        </VolumeText>
        <VolumeText $color="#0f8f1f" $width={150}>
          MA3:77027↑
        </VolumeText>
        <VolumeText $color="#8a8a8a" $width={219}>
          虚拟成交量:16.37万
        </VolumeText>
        <CollapseTab>
          <svg width="18" height="32" viewBox="0 0 18 32" fill="none" stroke="#ffffff" strokeWidth="4">
            <path d="M15 2 L3 16 L15 30" />
          </svg>
        </CollapseTab>
      </VolumeHeader>

      <VolumeChart />

      <Promo>
        <AskCard>
          <AskLogo>问Ai</AskLogo>
          <AskText>可川科技短期均线金叉，是否可以投...</AskText>
          <AskGo>
            <svg width="42" height="42" viewBox="0 0 42 42" fill="none" stroke="#ffffff" strokeWidth="4.4">
              <path d="M2 21 H38 M23 5 L39 21 L23 37" />
            </svg>
          </AskGo>
        </AskCard>
        <Banner>
          <svg width="46" height="40" viewBox="0 0 46 40" fill="#e85c0a">
            <rect x="0" y="14" width="3" height="12" />
            <path d="M6 12 L46 0 V40 L30 32 L26 37 L17 28 H6Z" />
          </svg>
          <BannerText>硬核科技+成长引擎！如何把握创业板机遇？</BannerText>
          <BannerDivider />
          <svg width="33" height="32" viewBox="0 0 33 32" fill="none" stroke="#e8641e" strokeWidth="3">
            <path d="M1 1 L32 31 M32 1 L1 31" />
          </svg>
        </Banner>
      </Promo>

      <SubTabs>
        <SubTab $active>股吧</SubTab>
        <SubTab>盘口</SubTab>
        <SubTab>资讯</SubTab>
        <SubTab>公告</SubTab>
        <SubTab>研报</SubTab>
        <SubTab>财务</SubTab>
        <SubTab>资料</SubTab>
      </SubTabs>

      <BottomBar>
        <IndexBlock>
          <IndexCaret />
          <IndexValue>3933.27</IndexValue>
          <IndexRow>
            <span>上证</span>
            <IndexChange>0.34%</IndexChange>
          </IndexRow>
        </IndexBlock>
        <TradeButton>开户交易</TradeButton>
        <BarAction $left={59}>
          <svg width="56" height="58" viewBox="0 0 56 58" fill="none" stroke="#666666" strokeWidth="3">
            <path d="M38 3 H9 Q3 3 3 9 V49 Q3 55 9 55 H47 Q53 55 53 49 V14" />
            <path d="M20 38 L44 2 L51 6 L26 42 L19 46Z" fill="#666666" stroke="none" />
          </svg>
          <BarActionLabel>发帖</BarActionLabel>
        </BarAction>
        <BarAction $left={39}>
          <svg width="54" height="58" viewBox="0 0 54 58" fill="none" stroke="#666666" strokeWidth="3">
            <rect x="2" y="2" width="21" height="24" rx="4" />
            <path d="M41 2 L52 14 L41 26 L30 14Z" />
            <rect x="2" y="33" width="21" height="23" rx="4" />
            <rect x="30" y="33" width="22" height="23" rx="4" />
          </svg>
          <BarActionLabel>功能</BarActionLabel>
        </BarAction>
        <BarAction $left={37}>
          <svg width="58" height="60" viewBox="0 0 58 60" fill="none" stroke="#666666" strokeWidth="3">
            <ellipse cx="29" cy="30" rx="27" ry="28" />
            <circle cx="19" cy="28" r="2.5" fill="#666666" stroke="none" />
            <circle cx="29" cy="28" r="2.5" fill="#666666" stroke="none" />
            <circle cx="39" cy="28" r="2.5" fill="#666666" stroke="none" />
          </svg>
          <BarActionLabel>设自选</BarActionLabel>
        </BarAction>
      </BottomBar>
    </Page>
  );
}
